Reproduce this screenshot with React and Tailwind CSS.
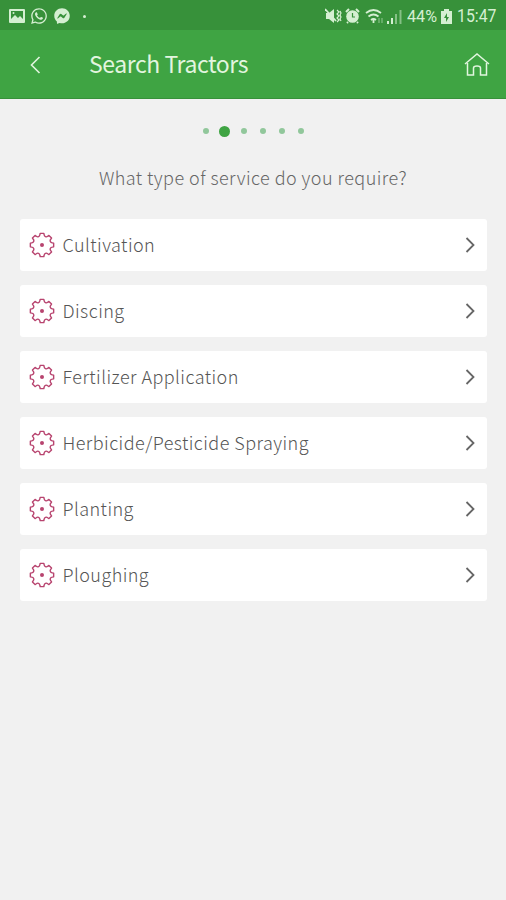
import { FaWhatsapp, FaFacebookMessenger } from "react-icons/fa";

const services = [
  "Cultivation",
  "Discing",
  "Fertilizer Application",
  "Herbicide/Pesticide Spraying",
  "Planting",
  "Ploughing",
];

const STEPS = 6;
const CURRENT_STEP = 1;

// Eight teeth, each followed by a rounded notch
function gearPath() {
  const point = (r, deg) => {
    const a = (deg * Math.PI) / 180;
    return `${(13 + r * Math.cos(a)).toFixed(2)} ${(13 + r * Math.sin(a)).toFixed(2)}`;
  };
  let d = `M${point(11.8, -9)}`;
  for (let i = 0; i < 8; i++) {
    const a = i * 45;
    d += `L${point(11.8, a + 9)}L${point(10.4, a + 12)}`;
    d += `A2.1 2.1 0 0 0 ${point(10.4, a + 33)}L${point(11.8, a + 36)}`;
  }
  return d + "Z";
}

function GearIcon() {
  return (
    <svg width="26" height="26" viewBox="0 0 26 26" fill="none" className="text-[#b8446f]">
      <path d={gearPath()} stroke="currentColor" strokeWidth="1.4" strokeLinejoin="round" />
      <circle cx="13" cy="13" r="2" fill="currentColor" />
    </svg>
  );
}

function StatusBar() {
  return (
    <div className="flex h-[30px] items-center justify-between bg-[#37913a] pl-[9px] pr-2 pt-0.5 text-[#d5efd2]">
      <div className="flex items-center">
        <svg width="16" height="14" viewBox="0 0 16 14">
          <path fill="currentColor" fillRule="evenodd" d="M1 0h14q1 0 1 1v12q0 1-1 1H1q-1 0-1-1V1q0-1 1-1ZM2 2v8l4-4 3 3 2-2 3 3V2Z" />
          <circle cx="4.5" cy="4" r="1" fill="currentColor" />
        </svg>
        <FaWhatsapp size={18} className="ml-[5px]" />
        <FaFacebookMessenger size={16} className="ml-[6px]" />
        <span className="ml-[13px] size-[3px] rounded-full bg-current" />
      </div>
      <div className="flex items-center">
        <svg width="17" height="16" viewBox="0 0 17 16" fill="none" stroke="currentColor">
          <path d="M1 5h3l5-4v14l-5-4H1Z" fill="currentColor" stroke="none" />
          <path d="M0 1l11 12" strokeWidth="1.8" />
          <path d="M12 2l2 2-2 2 2 2-2 2 2 2-2 2M15 3l1 2-1 2 1 2-1 2 1 2" strokeWidth="1.2" />
        </svg>
        <svg width="15" height="16" viewBox="0 0 15 16" className="ml-[3px]">
          <circle cx="7.5" cy="8.5" r="6.3" fill="currentColor" />
          <path d="M1 4l3-3M14 4l-3-3M3 14l-1 1M12 14l1 1" stroke="currentColor" strokeWidth="2" />
          <path d="M7.500 5v4H10" stroke="#37913a" strokeWidth="1.2" fill="none" />
        </svg>
        <svg width="19" height="16" viewBox="0 0 19 16" fill="none" stroke="currentColor" strokeWidth="1.8" className="ml-[5px]">
          <path d="M1 5q7.500-6 15 0M3.500 8.500q5-4 10 0M6 12q2.500-2 5 0" />
          <path d="M8.500 12v3" />
          <path d="M14 10v5M17 10v5" strokeWidth="1.300" opacity=".45" />
        </svg>
        <svg width="15" height="15" viewBox="0 0 15 15" className="ml-[3px]" fill="currentColor">
          <path d="M0 12h2v3H0zM4 9h2v6H4z" />
          <path d="M8 5h2v10H8zM12.500 1h2v14h-2z" opacity=".5" />
        </svg>
        <span className="ml-[5px] w-[31px] font-['Roboto',sans-serif] text-[17px] leading-5">
          <span className="inline-block origin-left scale-x-[.95]">44%</span>
        </span>
        <svg width="11" height="15" viewBox="0 0 11 15" className="ml-[3px]">
          <path d="M3 0h5v2h3v13H0V2h3Z" fill="currentColor" />
          <path d="M6 4L3 9h2v4l3-5H6Z" fill="#37913a" />
        </svg>
        <span className="ml-[5px] w-[41px] font-['Roboto',sans-serif] text-[18px] leading-5">
          <span className="inline-block origin-left scale-x-[.88]">15:47</span>
        </span>
      </div>
    </div>
  );
}

function Header() {
  return (
    <header className="flex h-[69px] items-center border-b border-[#37913a] bg-[#3fa443] text-[#e2f5df]">
      <svg width="12" height="18" viewBox="0 0 12 18" fill="none" className="ml-[29px] mt-0.5">
        <path d="M10.500 1L2.500 9l8 8" stroke="currentColor" strokeWidth="1.6" />
      </svg>
      <h1 className="-mt-0.5 ml-12 grow whitespace-nowrap font-['Noto_Sans_CJK_SC',sans-serif] text-[23px] leading-8 tracking-[-.45px]">
        Search Tractors
      </h1>
      <svg width="26" height="25" viewBox="0 0 26 25" fill="none" stroke="currentColor" strokeWidth="1.5" className="mr-4">
        <path d="M1 12L13 2l12 10" />
        <path d="M3.500 11v12h6v-7q0-2 3.500-2t3.500 2v7h6V11" />
      </svg>
    </header>
  );
}

function ServiceRow({ name }) {
  return (
    <button className="flex h-[52px] w-full items-center rounded-[3px] bg-white pl-[9px] pr-[11px] text-left">
      <GearIcon />
      <span className="-mt-[3px] ml-[7.5px] grow text-[18px] font-light leading-6 tracking-[.45px] text-[#555]">{name}</span>
      <svg width="12" height="18" viewBox="0 0 12 18" fill="none">
        <path d="M2.500 2l7 7-7 7" stroke="#666" strokeWidth="1.800" />
      </svg>
    </button>
  );
}

export default function App() {
  return (
    <div className="flex min-h-screen flex-col bg-[#f1f1f1] font-['Noto_Sans_CJK_SC',sans-serif]">
      <StatusBar />
      <Header />
      <main className="px-5 pt-[26px]">
        <div className="flex h-3 items-center justify-center">
          {Array.from({ length: STEPS }, (_, i) => (
            <div key={i} className="flex w-[19px] justify-center">
              <span
                className={
                  i === CURRENT_STEP
                    ? "size-[11px] rounded-full bg-[#3fa443]"
                    : "size-1.5 rounded-full bg-[#91c79b]"
                }
              />
            </div>
          ))}
        </div>
        <p className="mt-7 text-center text-[18px] font-light leading-6 tracking-[.45px] text-[#666]">
          What type of service do you require?
        </p>
        <div className="mr-[-1px] mt-[30px] flex flex-col gap-3.5">
          {services.map((name) => (
            <ServiceRow key={name} name={name} />
          ))}
        </div>
      </main>
    </div>
  );
}
